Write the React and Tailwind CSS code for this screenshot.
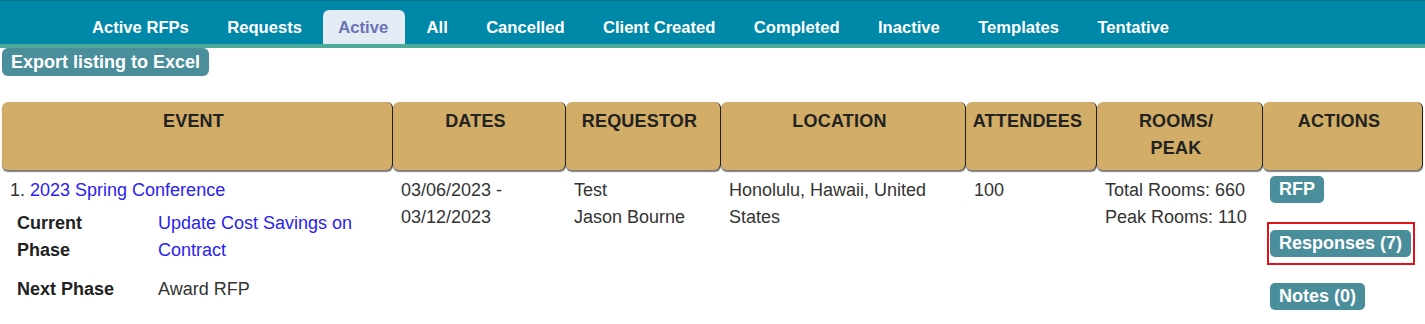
const TABS = ['Active RFPs', 'Requests', 'Active', 'All', 'Cancelled', 'Client Created', 'Completed', 'Inactive', 'Templates', 'Tentative']

const COLUMNS = [
  { key: 'event', label: 'EVENT' },
  { key: 'dates', label: 'DATES' },
  { key: 'requestor', label: 'REQUESTOR' },
  { key: 'location', label: 'LOCATION' },
  { key: 'attendees', label: 'ATTENDEES' },
  { key: 'rooms', label: <>ROOMS/<br />PEAK</> },
  { key: 'actions', label: 'ACTIONS' },
]

const GRID = 'grid grid-cols-[391px_173px_155px_245px_131px_166px_160px]'

function ActionButton({ children }) {
  return (
    <button className="h-[27px] px-[9px] rounded-[5px] bg-[#4b8e9b] text-white font-bold text-[18px] leading-[27px] whitespace-nowrap">
      {children}
    </button>
  )
}

export default function App() {
  return (
    <div className="w-[1425px] h-[324px] bg-white overflow-hidden font-['Liberation_Sans',Arial,sans-serif] text-[#333]">
      <nav className="h-[48px] bg-[#0088a8] border-t border-[#00708b] border-b-4 border-b-[#4da99a] flex items-end pl-[75px] gap-[4.4px]">
        {TABS.map(tab => (
          <div
            key={tab}
            className={
              tab === 'Active'
                ? 'h-[34px] pl-[15px] pr-[17px] pt-[2px] flex items-center rounded-t-[6px] bg-[#e3ebf4] text-[#6a73b3] font-bold text-[16.6px]'
                : 'h-[34px] px-[17px] pt-[2px] flex items-center text-white font-bold text-[16.6px]'
            }
          >
            {tab}
          </div>
        ))}
      </nav>

      <button className="ml-[2px] h-[28px] px-[9px] rounded-[6px] bg-[#4b8e9b] text-white font-bold text-[18px] leading-[28px]">
        Export listing to Excel
      </button>

      <div className={`${GRID} ml-[2px] mt-[26px]`}>
        {COLUMNS.map(col => (
          <div
            key={col.key}
            className="h-[68px] pt-[6px] pl-[5px] pr-[12px] text-center font-bold text-[18px] leading-[27px] tracking-[0.2px] text-[#222] bg-[#d1ad67] rounded-[6px] border-r border-[#1f1f1f] shadow-[0_2px_1px_rgba(0,0,0,0.5)]"
          >
            {col.label}
          </div>
        ))}
      </div>

      <div className={`${GRID} ml-[2px] text-[18px] leading-[27px]`}>
        <div className="pt-[7px] px-[8px]">
          <div>
            1. <a className="text-[#2a22f0]">2023 Spring Conference</a>
          </div>
          <div className="pl-[7px] grid grid-cols-[141px_1fr]">
            <div className="py-[6px] pr-[30px] font-bold text-[#222]">Current Phase</div>
            <div className="py-[6px] text-[#2a22f0]">Update Cost Savings on Contract</div>
            <div className="py-[6px] pr-[30px] font-bold text-[#222]">Next Phase</div>
            <div className="py-[6px]">Award RFP</div>
          </div>
        </div>
        <div className="pt-[7px] px-[8px]">03/06/2023 - 03/12/2023</div>
        <div className="pt-[7px] px-[8px]">
          <div>Test</div>
          <div>Jason Bourne</div>
        </div>
        <div className="pt-[7px] px-[8px]">Honolulu, Hawaii, United States</div>
        <div className="pt-[7px] px-[8px]">100</div>
        <div className="pt-[7px] px-[8px]">
          <div>Total Rooms: 660</div>
          <div>Peak Rooms: 110</div>
        </div>
        <div className="pt-[6px] pl-[7px] flex flex-col items-start">
          <ActionButton>RFP</ActionButton>
          <div className="mt-[19px] -ml-[3px] border-2 border-[#e3121b] pl-[1px] pr-[2px] py-[6px]">
            <ActionButton>Responses (7)</ActionButton>
          </div>
          <div className="mt-[18px]">
            <ActionButton>Notes (0)</ActionButton>
          </div>
        </div>
      </div>
    </div>
  )
}
